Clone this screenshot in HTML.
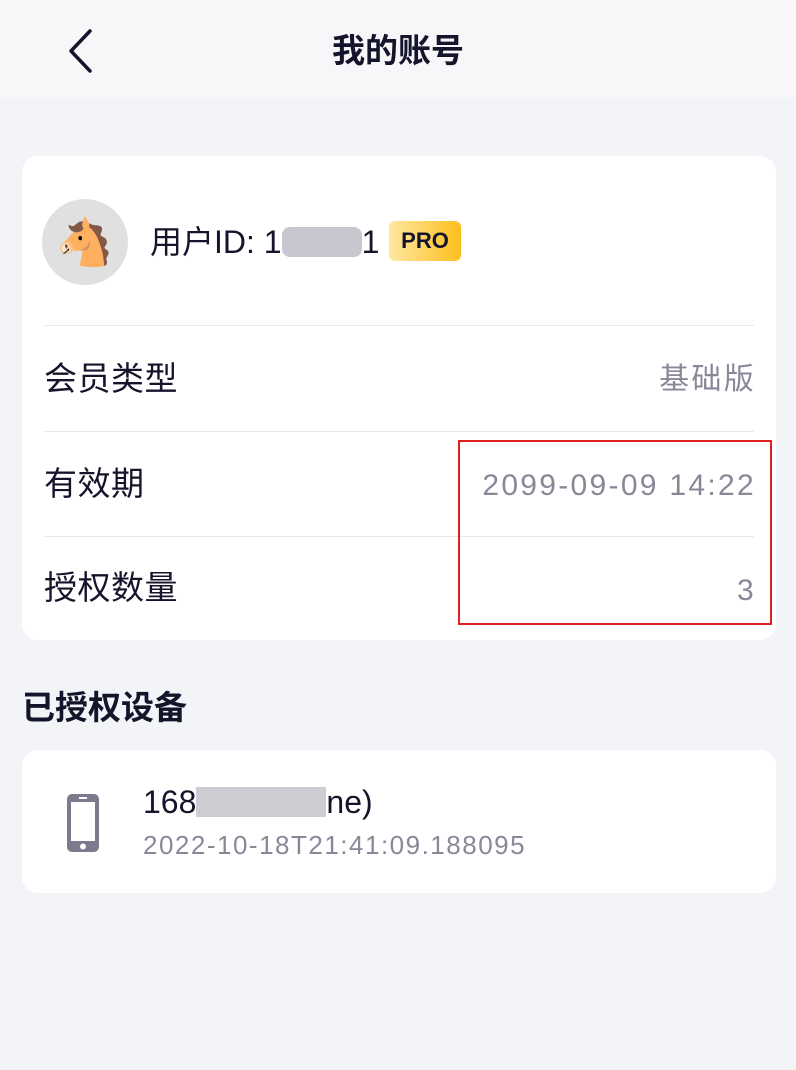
<!DOCTYPE html>
<html><head><meta charset="utf-8"><style>
*{margin:0;padding:0;box-sizing:border-box}
body{width:796px;height:1070px;background:#f3f4f8;font-family:"Liberation Sans","Noto Sans CJK SC",sans-serif;color:#14142b;position:relative;overflow:hidden}
.hdr{position:absolute;left:0;top:0;width:796px;height:98px;background:#f7f7f9}
.title{position:absolute;left:0;width:796px;top:29px;text-align:center;font-size:33px;font-weight:bold;line-height:44px}
.card{position:absolute;left:22px;width:754px;background:#fff;border-radius:16px}
.row{position:absolute;left:22px;right:22px;height:1px;background:#e8e8ee}
.lbl{position:absolute;left:22px;font-size:33px;line-height:40px;letter-spacing:.5px}
.val{position:absolute;right:22px;font-size:30px;line-height:40px;color:#8a8799;letter-spacing:2.3px;margin-right:-2px}
</style></head><body>
<div class="hdr"></div>
<svg style="position:absolute;left:66px;top:28px" width="30" height="46"><path d="M24 3 L5 23 L24 43" fill="none" stroke="#14142b" stroke-width="3.5" stroke-linecap="round" stroke-linejoin="round"/></svg>
<div class="title">我的账号</div>
<div class="card" style="top:156px;height:484px">
 <div style="position:absolute;left:20px;top:43px;width:86px;height:86px;border-radius:50%;background:#e0e0e0;text-align:center;font-size:46px;line-height:86px">🐴</div>
 <div style="position:absolute;left:128px;top:66px;font-size:32px;line-height:40px">用户ID: 1<span style="display:inline-block;width:80px;height:30px;background:#b0afba;vertical-align:-4px;border-radius:8px;opacity:.7"></span>1</div>
 <div style="position:absolute;left:367px;top:65px;width:72px;height:40px;border-radius:6px;background:linear-gradient(90deg,#fee7a0,#fdbf1e);font-size:22px;line-height:40px;text-align:center;font-weight:bold;color:#14142b">PRO</div>
 <div class="row" style="top:169px"></div>
 <div class="lbl" style="top:203px">会员类型</div><div class="val" style="top:204px">基础版</div>
 <div class="row" style="top:275px"></div>
 <div class="lbl" style="top:308px">有效期</div><div class="val" style="top:310px">2099-09-09 14:22</div>
 <div class="row" style="top:380px"></div>
 <div class="lbl" style="top:412px">授权数量</div><div class="val" style="top:415px">3</div>
</div>
<div style="position:absolute;left:458px;top:440px;width:314px;height:185px;border:2px solid #e02020"></div>
<div style="position:absolute;left:22px;top:688px;font-size:33px;font-weight:bold;line-height:40px">已授权设备</div>
<div class="card" style="top:750px;height:143px">
 <svg style="position:absolute;left:43px;top:42px" width="36" height="62"><rect x="2" y="2" width="32" height="58" rx="5" fill="#7d7a8e"/><rect x="6" y="10" width="24" height="39" fill="#fff"/><circle cx="18" cy="54.5" r="3" fill="#fff"/><rect x="14" y="5" width="8" height="2" fill="#fff"/></svg>
 <div style="position:absolute;left:121px;top:32px;font-size:32px;line-height:40px">168<span style="display:inline-block;width:130px;height:30px;background:#b9b8c2;opacity:.7;vertical-align:-4px"></span>ne)</div>
 <div style="position:absolute;left:121px;top:78px;font-size:26px;line-height:34px;color:#8a8799;letter-spacing:1.5px">2022-10-18T21:41:09.188095</div>
</div>
</body></html>
